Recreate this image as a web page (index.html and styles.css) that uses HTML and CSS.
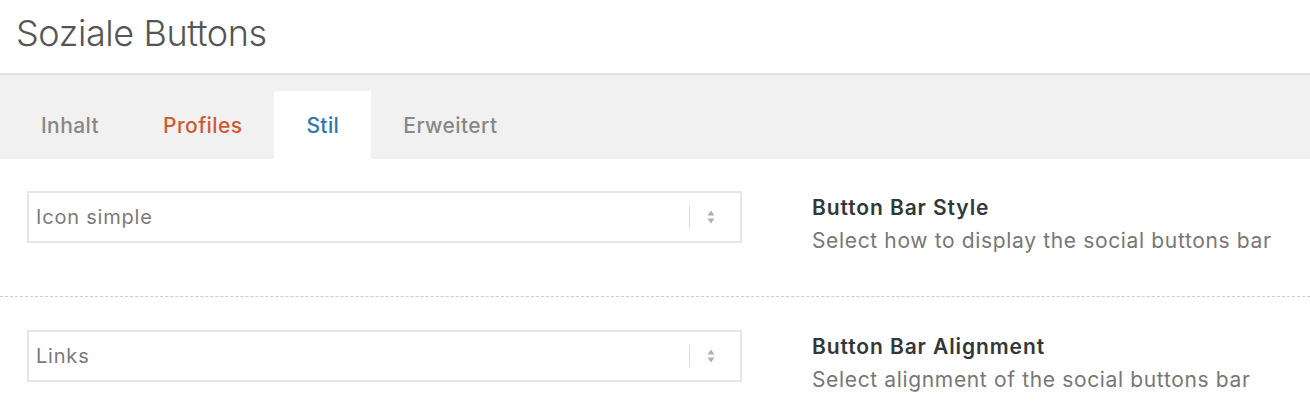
FILE: index.html
```html
<!DOCTYPE html>
<html lang="de">
<head>
<meta charset="utf-8">
<title>Soziale Buttons</title>
<link rel="stylesheet" href="styles.css">
</head>
<body>
<header class="header">
  <h1 class="title">Soziale Buttons</h1>
</header>
<nav class="tabs">
  <a class="tab">Inhalt</a>
  <a class="tab tab-warn">Profiles</a>
  <a class="tab tab-active">Stil</a>
  <a class="tab">Erweitert</a>
</nav>
<main class="form">
  <div class="row">
    <div class="select">
      <span class="select-value">Icon simple</span>
      <span class="select-sep"></span>
      <svg class="select-arrows" width="8" height="16" viewBox="0 0 8 16"><path d="M4 1.5 L7.5 6.5 H0.5 Z M4 14.5 L7.5 9.5 H0.5 Z" fill="#b0b0b0"/></svg>
    </div>
    <div class="info">
      <div class="info-title">Button Bar Style</div>
      <div class="info-desc">Select how to display the social buttons bar</div>
    </div>
  </div>
  <div class="row">
    <div class="select">
      <span class="select-value">Links</span>
      <span class="select-sep"></span>
      <svg class="select-arrows" width="8" height="16" viewBox="0 0 8 16"><path d="M4 1.5 L7.5 6.5 H0.5 Z M4 14.5 L7.5 9.5 H0.5 Z" fill="#b0b0b0"/></svg>
    </div>
    <div class="info">
      <div class="info-title">Button Bar Alignment</div>
      <div class="info-desc">Select alignment of the social buttons bar</div>
    </div>
  </div>
</main>
</body>
</html>
```
FILE: styles.css
```css
* { box-sizing: border-box; }
html, body { margin: 0; padding: 0; background: #fff; }
body { font-family: Inter, "Liberation Sans", Arial, sans-serif; overflow: hidden; }

.header {
  height: 75px;
  border-bottom: 2px solid #e2e2e2;
  padding: 12px 0 0 16px;
}
.title {
  margin: 0;
  font-size: 36px;
  font-weight: 300;
  color: #555;
  line-height: 42px;
  letter-spacing: -0.4px;
}

.tabs {
  display: flex;
  height: 84px;
  padding: 16px 0 0 9px;
  background: #f1f1f1;
}
.tab {
  display: flex;
  align-items: center;
  padding: 0 32px;
  height: 68px;
  font-size: 21px;
  font-weight: 500;
  letter-spacing: 0.4px;
  color: #888;
}
.tab-warn { color: #d05a32; }
.tab-active { background: #fff; color: #2e78aa; }

.row {
  display: flex;
  align-items: flex-start;
  padding: 32px 0 37px 27px;
  border-bottom: 1px dashed #cdcdcd;
}
.row + .row { padding-top: 33px; border-bottom: none; }

.select {
  display: flex;
  align-items: center;
  width: 715px;
  height: 52px;
  border: 2px solid #e6e6e6;
  padding: 0 0 0 7px;
}
.select-value {
  flex: 1;
  font-size: 20px;
  letter-spacing: 0.8px;
  color: #7a7a7a;
}
.select-sep {
  width: 1px;
  height: 22px;
  background: #dcdcdc;
}
.select-arrows { margin: 0 25px 0 17px; }

.info { margin-left: 70px; padding-top: 2px; }
.info-title {
  font-size: 21px;
  font-weight: 600;
  letter-spacing: 0.9px;
  color: #32373c;
  line-height: 30px;
}
.info-desc {
  font-size: 21px;
  letter-spacing: 0.65px;
  color: #777;
  line-height: 36px;
}
```
